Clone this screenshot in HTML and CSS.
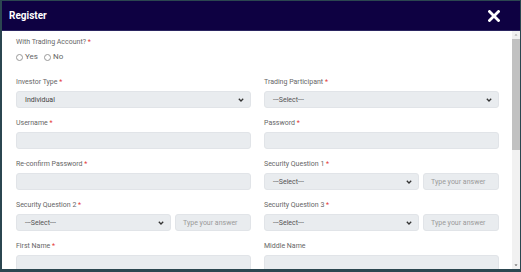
FILE: index.html
```html
<!DOCTYPE html>
<html>
<head>
<meta charset="utf-8">
<link rel="stylesheet" href="styles.css">
</head>
<body>
<div class="modal">
  <div class="modal-header">
    <span class="title">Register</span>
    <svg class="close" width="12" height="12" viewBox="0 0 12 12"><path d="M1.5 1.5 L10.5 10.5 M10.5 1.5 L1.5 10.5" stroke="#fff" stroke-width="2.8" stroke-linecap="square"/></svg>
  </div>
  <div class="modal-main">
    <div class="modal-body">
      <div class="field single">
        <label>With Trading Account? <span class="req">*</span></label>
        <div class="radios">
          <span class="radio"><span class="dot"></span>Yes</span>
          <span class="radio"><span class="dot"></span>No</span>
        </div>
      </div>
      <div class="grid">
        <div class="field">
          <label>Investor Type <span class="req">*</span></label>
          <div class="select dark"><span>Individual</span><svg class="chev" width="6" height="4" viewBox="0 0 6 4"><path d="M0.8 0.8 L3 3 L5.2 0.8" stroke="#333" stroke-width="1.3" fill="none"/></svg></div>
        </div>
        <div class="field">
          <label>Trading Participant <span class="req">*</span></label>
          <div class="select"><span>---Select---</span><svg class="chev" width="6" height="4" viewBox="0 0 6 4"><path d="M0.8 0.8 L3 3 L5.2 0.8" stroke="#333" stroke-width="1.3" fill="none"/></svg></div>
        </div>
        <div class="field">
          <label>Username <span class="req">*</span></label>
          <div class="input"></div>
        </div>
        <div class="field">
          <label>Password <span class="req">*</span></label>
          <div class="input"></div>
        </div>
        <div class="field">
          <label>Re-confirm Password <span class="req">*</span></label>
          <div class="input"></div>
        </div>
        <div class="field">
          <label>Security Question 1 <span class="req">*</span></label>
          <div class="pair">
            <div class="select"><span>---Select---</span><svg class="chev" width="6" height="4" viewBox="0 0 6 4"><path d="M0.8 0.8 L3 3 L5.2 0.8" stroke="#333" stroke-width="1.3" fill="none"/></svg></div>
            <div class="input ph">Type your answer</div>
          </div>
        </div>
        <div class="field">
          <label>Security Question 2 <span class="req">*</span></label>
          <div class="pair">
            <div class="select"><span>---Select---</span><svg class="chev" width="6" height="4" viewBox="0 0 6 4"><path d="M0.8 0.8 L3 3 L5.2 0.8" stroke="#333" stroke-width="1.3" fill="none"/></svg></div>
            <div class="input ph">Type your answer</div>
          </div>
        </div>
        <div class="field">
          <label>Security Question 3 <span class="req">*</span></label>
          <div class="pair">
            <div class="select"><span>---Select---</span><svg class="chev" width="6" height="4" viewBox="0 0 6 4"><path d="M0.8 0.8 L3 3 L5.2 0.8" stroke="#333" stroke-width="1.3" fill="none"/></svg></div>
            <div class="input ph">Type your answer</div>
          </div>
        </div>
        <div class="field">
          <label>First Name <span class="req">*</span></label>
          <div class="input"></div>
        </div>
        <div class="field">
          <label>Middle Name</label>
          <div class="input"></div>
        </div>
      </div>
    </div>
    <div class="scrollbar">
      <svg class="arrow" width="8" height="7" viewBox="0 0 8 7"><path d="M2.5 4.5 L4 3 L5.5 4.5 Z" fill="#a3a3a3"/></svg>
      <div class="track"><div class="thumb"></div></div>
      <svg class="arrow" width="8" height="7" viewBox="0 0 8 7"><path d="M2.5 2.5 L4 4 L5.5 2.5 Z" fill="#505050"/></svg>
    </div>
  </div>
</div>
</body>
</html>
```

FILE: styles.css
```css
html, body {
  margin: 0;
  padding: 0;
}
body {
  background: #2b4650;
  width: 521px;
  height: 272px;
  overflow: hidden;
  font-family: Roboto, "Liberation Sans", sans-serif;
}
.modal {
  margin: 1px 1px 3px 2px;
  height: 268px;
  display: flex;
  flex-direction: column;
  background: #fff;
}
.modal-header {
  height: 30px;
  flex: none;
  background: #0e0142;
  display: flex;
  align-items: center;
  justify-content: space-between;
  padding: 0 20px 0 7px;
  box-sizing: border-box;
  border-bottom: 1px solid #2a2460;
}
.title {
  color: #fff;
  font-weight: 700;
  font-size: 10px;
}
.close {
  display: block;
}
.modal-main {
  flex: 1;
  min-height: 0;
  display: flex;
}
.modal-body {
  flex: 1;
  overflow: hidden;
  padding: 5px 13px 0 14px;
}
.scrollbar {
  width: 8px;
  flex: none;
  background: #f1f1f1;
  display: flex;
  flex-direction: column;
}
.arrow {
  display: block;
  flex: none;
}
.track {
  flex: 1;
  padding-top: 1px;
}
.thumb {
  height: 111px;
  background: #c1c1c1;
}
label {
  display: block;
  font-size: 7px;
  line-height: 12px;
  color: #666;
  margin-bottom: 3px;
}
.req {
  color: #e53935;
}
.field.single {
  margin-bottom: 13px;
}
.radios {
  display: flex;
  gap: 6px;
  margin-top: 1px;
  font-size: 8px;
  line-height: 12px;
  color: #666;
}
.radio {
  display: flex;
  align-items: center;
  gap: 2px;
}
.dot {
  width: 5px;
  height: 5px;
  border: 1px solid #999;
  border-radius: 50%;
}
.grid {
  display: grid;
  grid-template-columns: 235px 235px;
  column-gap: 13px;
}
.field {
  margin-bottom: 9px;
}
.input, .select {
  height: 17px;
  box-sizing: border-box;
  background: #e9ecef;
  border: 1px solid #e1e4e8;
  border-radius: 3px;
  font-size: 7px;
  color: #555;
  display: flex;
  align-items: center;
}
.select {
  justify-content: space-between;
  padding: 0 6px 0 8px;
}
.select.dark {
  color: #444;
}
.chev {
  display: block;
}
.pair {
  display: grid;
  grid-template-columns: 155px 76px;
  column-gap: 4px;
}
.input.ph {
  color: #9a9a9a;
  padding-left: 7px;
}
```
